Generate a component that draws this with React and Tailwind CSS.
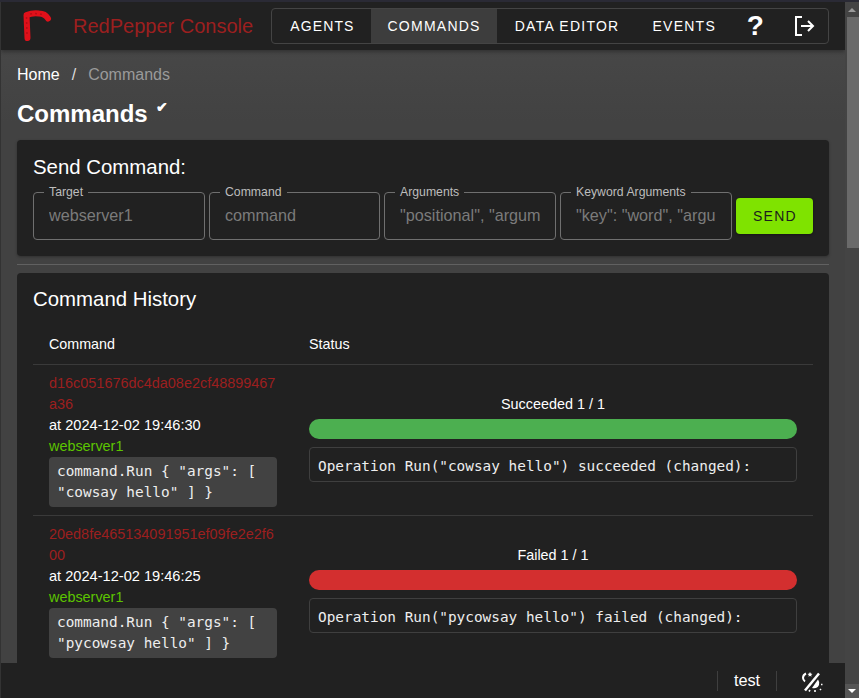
import React from "react";

function Field({ label, placeholder, className }) {
  return (
    <div className={`relative h-[48px] rounded border border-[#6f6f6f] ${className}`}>
      <span className="absolute left-[10px] top-[-8px] bg-[#212121] px-[5px] text-[12.25px] leading-[14px] text-[#bdbdbd] whitespace-nowrap">{label}</span>
      <div className="h-full flex items-center px-[15px] pb-[1px]">
        <input readOnly placeholder={placeholder} className="block w-full min-w-0 bg-transparent outline-none text-[16.2px] placeholder:text-[#7b7b7b]" />
      </div>
    </div>
  );
}

function Row({ id1, id2, time, cmd1, cmd2, status, barColor, output, last }) {
  return (
    <div className={`flex h-[151px] ${last ? "" : "border-b border-[#3a3a3a]"}`}>
      <div className="w-[260px] shrink-0 px-[16px] pt-[8px] text-[14.4px] leading-[21px]">
        <div className="text-[14.45px] text-[#9c1f1f]">{id1}<br />{id2}</div>
        <div className="text-[14.6px] text-white">{time}</div>
        <div className="text-[#5cc400]">webserver1</div>
        <div className="w-[228px] rounded bg-[#424242] px-[8px] py-[4px] font-['DejaVu_Sans_Mono',monospace] text-[14.4px] leading-[21px] text-[#eeeeee] whitespace-pre">{cmd1}{"\n"}{cmd2}</div>
      </div>
      <div className="flex-1 px-[16px] pt-[29px]">
        <div className="text-center text-[14.4px] leading-[21px] text-white">{status}</div>
        <div className={`mt-[4px] h-[20px] rounded-full ${barColor}`} />
        <div className="mt-[8px] h-[35px] rounded border border-[#3f3f3f] px-[8px] pt-[5px] flex items-center font-['DejaVu_Sans_Mono',monospace] text-[14.4px] text-[#eeeeee] whitespace-pre">{output}</div>
      </div>
    </div>
  );
}

export default function App() {
  return (
    <div className="relative h-[698px] w-[859px] overflow-hidden bg-[#444444] font-['Liberation_Sans',Arial,sans-serif] text-white">
      <div className="h-[2px] bg-[#2a2a35]" />
      <div className="flex h-[696px]">
        <div className="w-[1px] shrink-0 bg-[#333333]" />
        <div className="relative flex w-[844px] shrink-0 flex-col overflow-hidden bg-[linear-gradient(#4a4a4a,#424242_120px)]">
          <header className="z-10 flex h-[48px] shrink-0 items-center bg-[#212121] pl-[20px] pr-[16px] shadow-[0_2px_4px_rgba(0,0,0,0.3)]">
            <svg width="32" height="34" viewBox="0 0 32 34" className="shrink-0">
              <path d="M6.5 29 L5.5 6 Q12 3.5 18 4.5 Q24 4.5 27 9.5" fill="none" stroke="#e0101a" strokeWidth="6" strokeLinecap="round" strokeLinejoin="round" />
              <path d="M6 25 L5.5 7 M9 5 Q16 4 22 5.5" fill="none" stroke="#b80c14" strokeWidth="1.5" strokeDasharray="2 3" />
            </svg>
            <div className="ml-[20px] whitespace-nowrap text-[20px] text-[#9c1f1f]">RedPepper Console</div>
            <nav className="ml-auto flex h-[36px] items-stretch rounded border border-[#444444] text-[14px] tracking-[1.25px] text-white">
              <div className="flex items-center pl-[18px] pr-[17px] tracking-[1.1px]">AGENTS</div>
              <div className="flex items-center bg-[#3d3d3d] px-[16px]">COMMANDS</div>
              <div className="flex items-center pl-[18px] pr-[16px]">DATA EDITOR</div>
              <div className="flex items-center pl-[17px] pr-[16px]">EVENTS</div>
              <div className="flex w-[48px] items-center justify-center text-[28px] font-bold">?</div>
              <div className="flex w-[48px] items-center justify-center">
                <svg width="24" height="24" viewBox="0 0 24 24" fill="none" stroke="white" strokeWidth="2">
                  <path d="M10 3 H4 V21 H10" />
                  <path d="M9 12 H21 M16 7 L21 12 L16 17" />
                </svg>
              </div>
            </nav>
          </header>

          <main className="min-h-0 flex-1 overflow-hidden px-[16px]">
            <div className="flex items-center pt-[13px] text-[16px] leading-[24px]">
              <span className="text-white">Home</span>
              <span className="mx-[12px] text-[#dddddd]">/</span>
              <span className="text-[#9a9a9a]">Commands</span>
            </div>
            <div className="mt-[10px] flex h-[34px] items-start">
              <h1 className="text-[24px] font-bold leading-[34px]">Commands</h1>
              <span className="ml-[8px] text-[14px] font-bold leading-[20px]">✔</span>
            </div>

            <section className="mt-[9px] h-[116px] rounded bg-[#212121] px-[16px] pt-[13px] shadow-[0_1px_3px_rgba(0,0,0,0.3)]">
              <div className="text-[20.4px] leading-[28px]">Send Command:</div>
              <div className="mt-[11px] flex items-start gap-[4px]">
                <Field label="Target" placeholder="webserver1" className="w-[172px]" />
                <Field label="Command" placeholder="command" className="w-[171px]" />
                <Field label="Arguments" placeholder={'"positional", "argument"'} className="w-[172px]" />
                <Field label="Keyword Arguments" placeholder={'"key": "word", "argument"'} className="w-[172px]" />
                <div className="mt-[6px] flex h-[36px] flex-1 items-center justify-center rounded bg-[#7fe300] pl-[1px] text-[14px] tracking-[1.3px] text-[#1c1c1c] shadow-[0_1px_3px_rgba(0,0,0,0.4)]">SEND</div>
              </div>
            </section>

            <hr className="mt-[8px] h-[1px] border-0 bg-[#616161]" />

            <section className="mt-[8px] h-[420px] rounded-t bg-[#212121] px-[16px] pt-[12px]">
              <div className="text-[20.4px] leading-[28px]">Command History</div>
              <div className="mt-[8px] flex h-[44px] items-center border-b border-[#3a3a3a] pt-[4px] text-[14.3px]">
                <div className="w-[260px] pl-[16px]">Command</div>
                <div className="pl-[16px]">Status</div>
              </div>
              <Row id1="d16c051676dc4da08e2cf48899467" id2="a36" time="at 2024-12-02 19:46:30" cmd1={'command.Run { "args": ['} cmd2={'"cowsay hello" ] }'} status="Succeeded 1 / 1" barColor="bg-[#4caf50]" output={'Operation Run("cowsay hello") succeeded (changed):'} />
              <Row id1="20ed8fe465134091951ef09fe2e2f6" id2="00" time="at 2024-12-02 19:46:25" cmd1={'command.Run { "args": ['} cmd2={'"pycowsay hello" ] }'} status="Failed 1 / 1" barColor="bg-[#d32f2f]" output={'Operation Run("pycowsay hello") failed (changed):'} last />
            </section>
          </main>

          <footer className="absolute bottom-0 left-0 right-0 z-10 flex h-[35px] items-center justify-end bg-[#212121]">
            <div className="flex h-[20px] w-[59px] items-center justify-center border-l border-[#3f3f3f] text-[16.3px]">test</div>
            <div className="flex h-[20px] w-[69px] items-center justify-center border-l border-[#3f3f3f]">
              <svg width="24" height="24" viewBox="0 0 24 24" fill="none" stroke="white" strokeWidth="2">
                <path d="M6 21.5 L20 4.5" strokeWidth="2.5" />
                <path d="M7 4.5 A5 5 0 0 0 4 9 A5 5 0 0 0 6 12.5" />
                <path d="M11 3 l0.8 1.6 l1.7 0.3 l-1.3 1.1 l0.3 1.7 l-1.5 -0.9 l-1.5 0.9 l0.3 -1.7 l-1.3 -1.1 l1.7 -0.3 z" fill="white" stroke="none" />
                <path d="M19 10.5 A6 6 0 0 1 20 16 A6 6 0 0 1 13 19 Z" fill="white" stroke="none" />
                <path d="M22 15.5 h1.5 M21 20 l1 1 M16 21 v2 M11 21 l-1 1.5" strokeWidth="1.6" />
              </svg>
            </div>
          </footer>
        </div>

        <div className="relative w-[14px] shrink-0 bg-[#444444]">
          <div className="flex h-[15px] items-center justify-center">
            <div className="h-0 w-0 border-x-[4px] border-b-[4px] border-x-transparent border-b-[#9a9a9a]" />
          </div>
          <div className="ml-[2px] h-[231px] bg-[#6a6a6a]" />
          <div className="absolute bottom-0 left-0 right-0 flex h-[14px] items-center justify-center bg-[#555555]">
            <div className="h-0 w-0 border-x-[4px] border-t-[4px] border-x-transparent border-t-white" />
          </div>
        </div>
      </div>
    </div>
  );
}
